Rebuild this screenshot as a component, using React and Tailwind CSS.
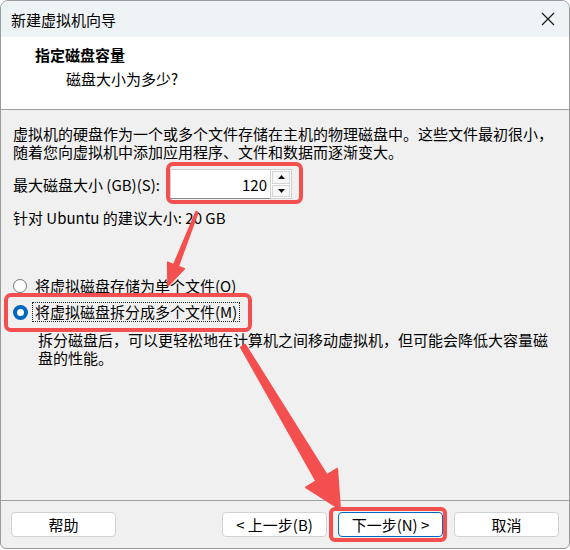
import React from "react";

const font = { fontFamily: '"Noto Sans CJK SC", "Noto Sans", sans-serif' };

function Btn({ children, primary }) {
  return (
    <div
      className={
        "w-[105px] h-[25px] flex items-center justify-center rounded-[4px] bg-white text-[15px] leading-none text-black " +
        (primary ? "border border-[#0067c0]" : "border border-[#d2d2d2]")
      }
    >
      {children}
    </div>
  );
}

export default function App() {
  return (
    <div className="w-[570px] h-[550px] bg-white relative overflow-hidden text-black" style={font}>
      <div className="h-[549px] flex flex-col border border-[#9a9a9a] rounded-t-[8px] rounded-b-[6px] overflow-hidden bg-[#f0f0f0]">
        {/* Title bar */}
        <div className="h-[36px] shrink-0 bg-[#eef3f6] flex items-center justify-between pl-[10px] pr-[16px]">
          <span className="text-[15px] leading-none">新建虚拟机向导</span>
          <svg width="14" height="14" viewBox="0 0 14 14" className="mr-[-2px]">
            <path d="M1 1 L13 13 M13 1 L1 13" stroke="#1a1a1a" strokeWidth="1.2" fill="none" />
          </svg>
        </div>
        {/* Header */}
        <div className="h-[73px] shrink-0 bg-white border-b border-[#a0a0a0] pl-[34px] pt-[8px]">
          <div className="text-[15px] leading-[20px] font-bold">指定磁盘容量</div>
          <div className="text-[15px] leading-[20px] mt-[4px] pl-[31px]">磁盘大小为多少?</div>
        </div>
        {/* Body */}
        <div className="flex-1 px-[12px] pt-[15px] text-[15px]">
          <div className="leading-[18px] whitespace-nowrap">
            虚拟机的硬盘作为一个或多个文件存储在主机的物理磁盘中。这些文件最初很小，
            <br />
            随着您向虚拟机中添加应用程序、文件和数据而逐渐变大。
          </div>
          <div className="mt-[8px] h-[30px] flex items-center">
            <span className="w-[157px] leading-none whitespace-nowrap">最大磁盘大小 (GB)(S):</span>
            <div className="flex h-[30px]">
              <div className="w-[101px] h-[30px] bg-white border border-[#d0d0d0] border-b-[#8a8a8a] flex items-center justify-end pr-[3px] leading-none">
                120
              </div>
              <div className="w-[21px] h-[30px] flex flex-col bg-white border border-l-0 border-[#d0d0d0] p-[1px] gap-[1px]">
                <div className="flex-1 border border-[#d6d6d6] bg-[#f7f7f7] flex items-center justify-center">
                  <svg width="7" height="4" viewBox="0 0 7 4"><path d="M0 4 L3.5 0 L7 4 Z" fill="#111" /></svg>
                </div>
                <div className="flex-1 border border-[#d6d6d6] bg-[#f7f7f7] flex items-center justify-center">
                  <svg width="7" height="4" viewBox="0 0 7 4"><path d="M0 0 L3.5 4 L7 0 Z" fill="#111" /></svg>
                </div>
              </div>
            </div>
          </div>
          <div className="mt-[10px] leading-[18px] whitespace-nowrap">针对 Ubuntu 的建议大小: 20 GB</div>

          <div className="mt-[49px] h-[20px] flex items-center">
            <div className="w-[14px] h-[14px] rounded-full border border-[#7a7a7a] bg-white shrink-0"></div>
            <span className="ml-[5px] px-[2px] border border-transparent leading-[18px] whitespace-nowrap">将虚拟磁盘存储为单个文件(O)</span>
          </div>
          <div className="mt-[6px] h-[20px] flex items-center">
            <div className="w-[15px] h-[15px] rounded-full bg-[#0067c0] shrink-0 flex items-center justify-center">
              <div className="w-[7px] h-[7px] rounded-full bg-white"></div>
            </div>
            <span className="ml-[4px] px-[2px] border border-dotted border-[#222] leading-[18px] whitespace-nowrap">将虚拟磁盘拆分成多个文件(M)</span>
          </div>
          <div className="mt-[9px] pl-[25px] leading-[18px] whitespace-nowrap">
            拆分磁盘后，可以更轻松地在计算机之间移动虚拟机，但可能会降低大容量磁
            <br />
            盘的性能。
          </div>
        </div>
        {/* Footer */}
        <div className="h-[48px] shrink-0 border-t border-[#a0a0a0] px-[10px] pt-[11px] flex items-start">
          <Btn>帮助</Btn>
          <div className="flex-1"></div>
          <div className="flex gap-[11px]">
            <Btn>&lt; 上一步(B)</Btn>
            <Btn primary>下一步(N) &gt;</Btn>
            <Btn>取消</Btn>
          </div>
        </div>
      </div>

      {/* Annotation overlay */}
      <div className="absolute inset-0 pointer-events-none">
        <div className="absolute left-[166px] top-[162px] w-[137px] h-[42px] border-[4px] border-[#f44f4f] rounded-[7px]"></div>
        <div className="absolute left-[4px] top-[293px] w-[248px] h-[39px] border-[4px] border-[#f44f4f] rounded-[7px]"></div>
        <div className="absolute left-[329px] top-[507px] w-[118px] h-[35px] border-[4px] border-[#f44f4f] rounded-[6px]"></div>
        <svg width="570" height="550" className="absolute left-0 top-0">
          <polygon
            points="196.1,211.6 197.9,212.4 178.3,266.4 184.4,268.8 168,286 167.6,262.2 173.7,264.6"
            fill="#f44f4f"
            stroke="#f44f4f"
            strokeWidth="1.5"
            strokeLinejoin="round"
          />
          <polygon
            points="240.9,347.3 245.1,344.7 326.8,475.0 337.1,468.9 340,509 306.1,487.3 316.4,481.2"
            fill="#f44f4f"
            stroke="#f44f4f"
            strokeWidth="2"
            strokeLinejoin="round"
          />
        </svg>
      </div>
    </div>
  );
}
